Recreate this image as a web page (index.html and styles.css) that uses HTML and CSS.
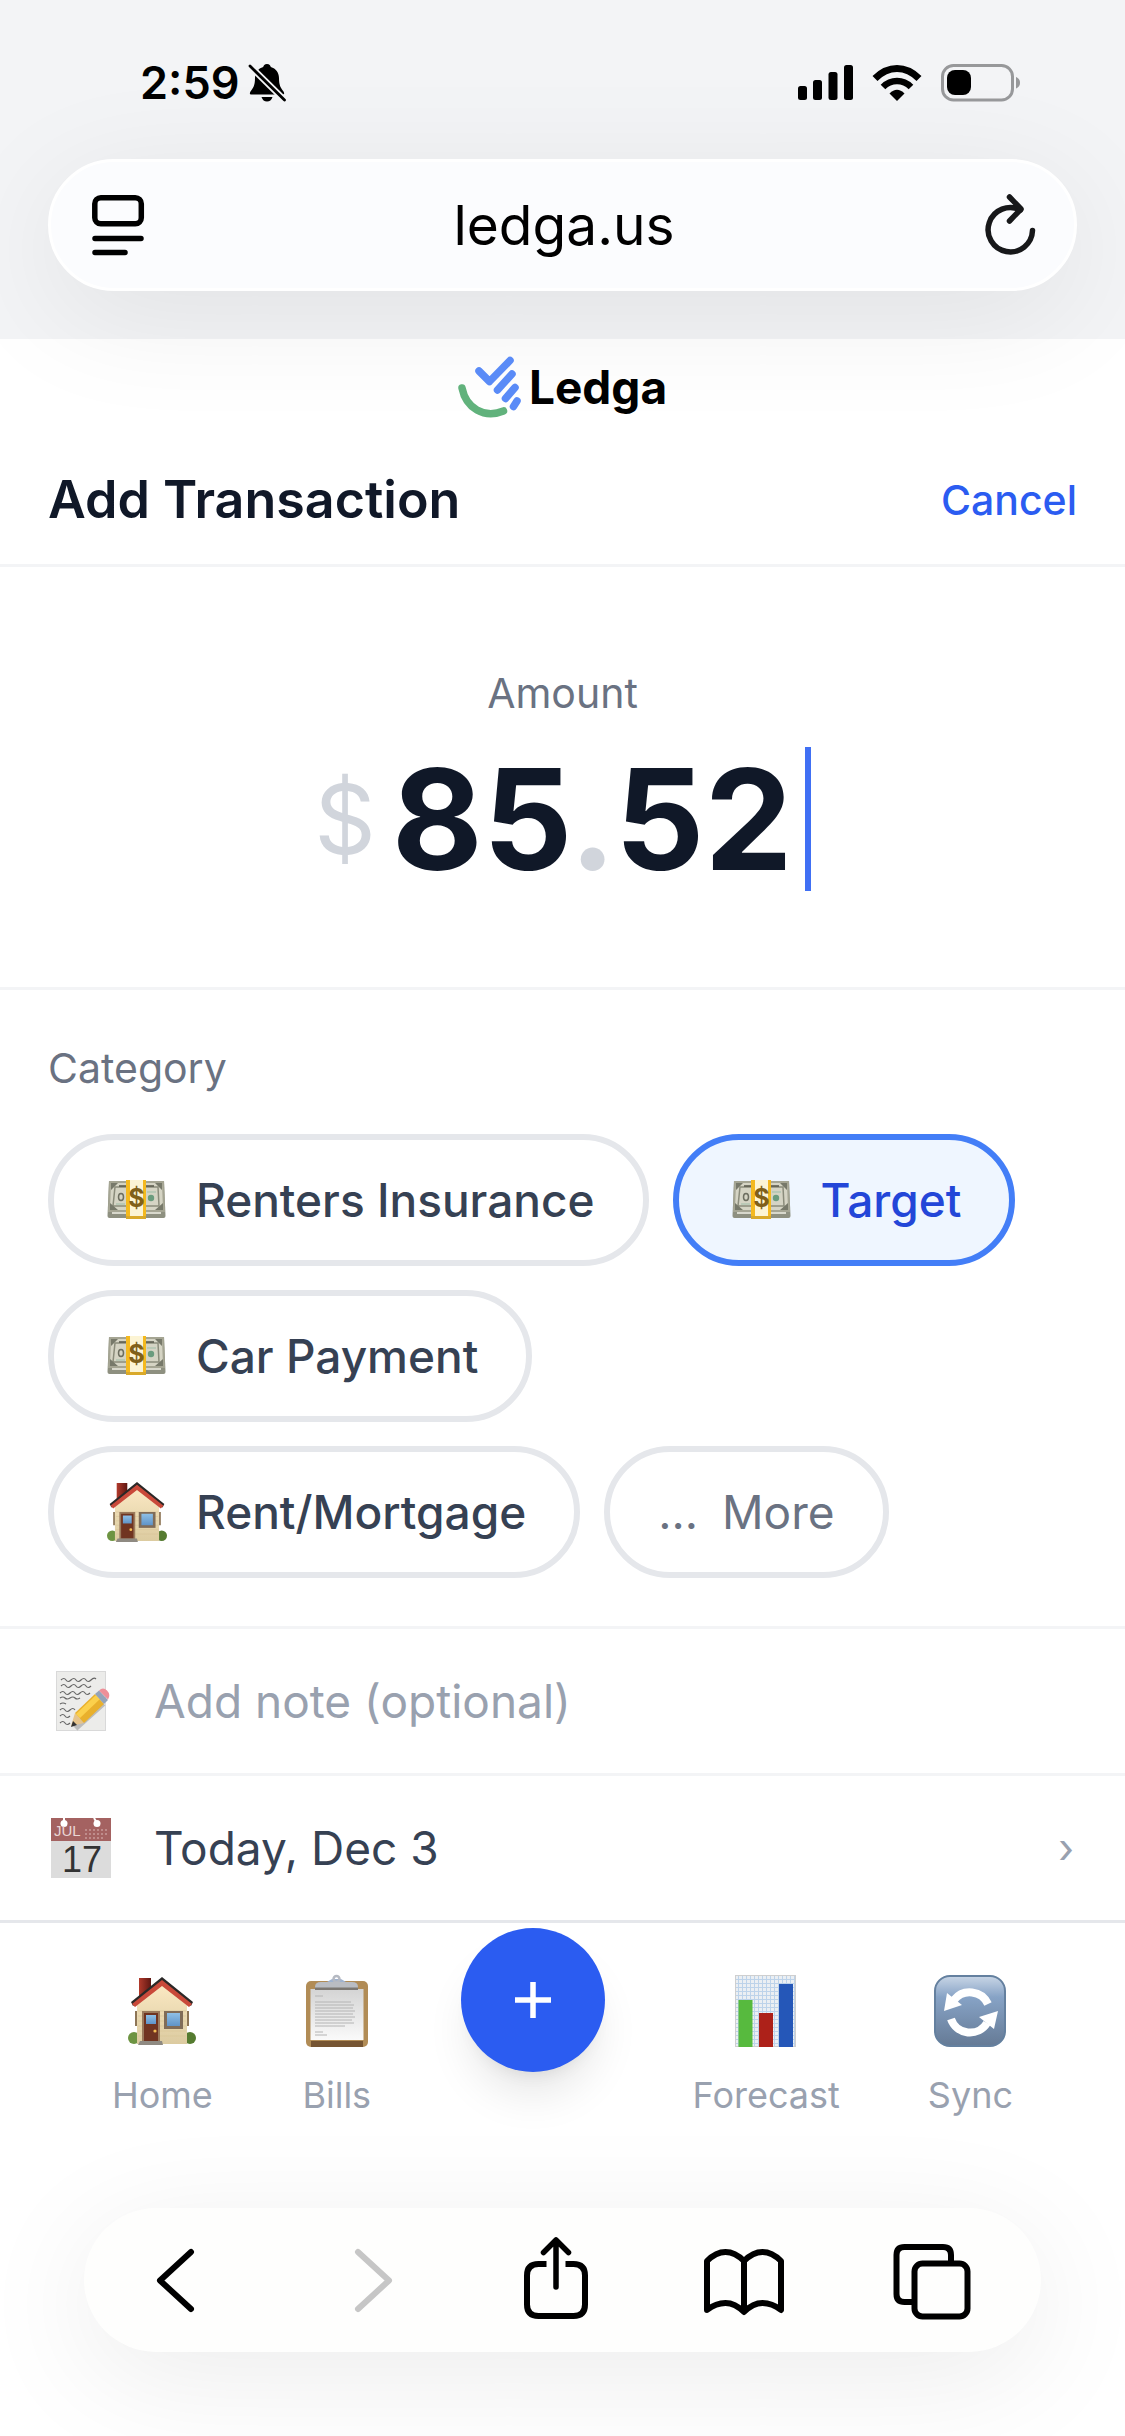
FILE: index.html
```html
<!DOCTYPE html>
<html lang="en">
<head>
    <meta charset="UTF-8">
    <meta name="viewport" content="width=device-width">
    <title>Ledga - Add Transaction</title>
    <link rel="stylesheet" href="styles.css">
</head>

<body>

<!-- shared icons -->
<svg class="defs" aria-hidden="true">
    <defs>
        <linearGradient id="wall" x1="0" y1="0" x2="0" y2="1"><stop offset="0" stop-color="#fbe9c4"/><stop offset="1" stop-color="#dccba0"/></linearGradient>
        <linearGradient id="sky" x1="0" y1="0" x2="0" y2="1"><stop offset="0" stop-color="#8fc0e6"/><stop offset="1" stop-color="#5f93c8"/></linearGradient>
        <linearGradient id="brick" x1="0" y1="0" x2="1" y2="0"><stop offset="0" stop-color="#b23a2c"/><stop offset="1" stop-color="#5e1712"/></linearGradient>
        <linearGradient id="paper" x1="0" y1="0" x2="0" y2="1"><stop offset="0" stop-color="#d4d4d4"/><stop offset="1" stop-color="#fafafa"/></linearGradient>
        <linearGradient id="steel" x1="0" y1="0" x2="0" y2="1"><stop offset="0" stop-color="#c9d6e6"/><stop offset="0.3" stop-color="#87a3c6"/><stop offset="1" stop-color="#657a95"/></linearGradient>
        <pattern id="grid" width="4" height="4" patternUnits="userSpaceOnUse"><path d="M0 .5h4M.5 0v4" stroke="#bdd3ea"/></pattern>

        <symbol id="money" viewBox="0 0 60 60">
            <path d="M2 11h55l1.500 35q0 2-2 2h-54q-2 0-2-2z" fill="#8e9080"/>
            <path d="M2 11h55l1 31h-57z" fill="#a5a593"/>
            <path d="M4 13h51l1 27h-53z" fill="#d5d4c4"/>
            <path d="M8 17h43l1 19h-46z" fill="none" stroke="#8b8c7b" stroke-width="1.500"/>
            <path d="M5 43h49" stroke="#d8d8cc" stroke-width="2"/>
            <path d="M4 13h7l-7 7zM55 13h-7l7 7zM3 40h8l-8-7zM56 40h-8l8-7z" fill="#77796a"/>
            <path d="M12 16h8M39 16h8" stroke="#555648" stroke-width="1.500"/>
            <ellipse cx="14" cy="27" rx="2.500" ry="3.500" fill="none" stroke="#6d6e60" stroke-width="1.500"/>
            <circle cx="44" cy="28" r="3.200" fill="#6b9c7e"/>
            <path d="M9 34h9M40 22h9" stroke="#9fbea9" stroke-width="1"/>
            <path d="M19 10h20v38h-20z" fill="#f4b91f"/>
            <path d="M23 10h13v38h-13z" fill="#fcf4d4"/>
            <path d="M19 46h20v3h-20z" fill="#d9a92a"/>
            <text x="29.500" y="37" text-anchor="middle" class="bill-sign">$</text>
        </symbol>

        <symbol id="house" viewBox="0 0 68 68">
            <circle cx="6" cy="61" r="6" fill="#6d9442"/>
            <circle cx="62" cy="61" r="6" fill="#557b30"/>
            <path d="M7 34h2v15h-2zM59 34h2v15h-2z" fill="#8d7556"/>
            <path d="M34 6l25 22v39h-50v-39z" fill="url(#wall)"/>
            <path d="M10 34h48M10 39h48M10 44h48M10 49h48M10 54h48M10 59h48" stroke="#d9c598" stroke-width=".7"/>
            <path d="M11 1h12v13l-12 10z" fill="url(#brick)"/>
            <path d="M3 25L34 0l31 25-2 4L34 6 5 29z" fill="#2b2827"/>
            <path d="M4 27L34 3l30 24-3 3L34 9 7 30z" fill="#c9493a"/>
            <path d="M14 34h18v32h-18z" fill="#9a7a5c"/>
            <path d="M16 36h14v28h-14z" fill="#703421"/>
            <path d="M18 38h10v9h-10z" fill="url(#sky)"/>
            <circle cx="27" cy="54" r="1.600" fill="#f3bd55"/>
            <path d="M36 34h19v18h-19z" fill="#806c58"/>
            <path d="M39 36h13v13h-13z" fill="url(#sky)"/>
            <path d="M12 64h22l1 4h-25z" fill="#8f8a82"/>
        </symbol>
    </defs>
</svg>

<header class="browser-top">
    <div class="status">
        <div class="status-left">
            <span>2:59</span>
            <!-- muted bell -->
            <svg width="38" height="38" viewBox="0 0 38 38">
                <path d="M19 0c2.500 0 3.500 1.500 3.800 3 5 1.500 8.200 5.500 8.200 11 0 8 2 10 4.500 13.500 1 1.500 1 3-1 3H3.500c-2 0-2-1.500-1-3C5 24 7 22 7 14c0-5.500 3.200-9.500 8.200-11C15.500 1.500 16.500 0 19 0z"/>
                <path d="M13.500 33h11q-1.500 4.500-5.500 4.500T13.500 33z"/>
                <path d="M2 2l35 34.500" stroke="#f3f4f6" stroke-width="6.500"/>
                <path d="M2 2l34.500 34" stroke="#000" stroke-width="2.800" stroke-linecap="round"/>
            </svg>
        </div>
        <div class="status-right">
            <svg width="55" height="36" viewBox="0 0 55 36">
                <rect x="0" y="21" width="9" height="14" rx="2.500"/>
                <rect x="15" y="15" width="9" height="20" rx="2.500"/>
                <rect x="30.500" y="7" width="9" height="28" rx="2.500"/>
                <rect x="46" y="0" width="9" height="35" rx="2.500"/>
            </svg>
            <svg width="50" height="36" viewBox="0 0 50 36">
                <path d="M3 13.500Q13 3.500 25 3.500t22 10" fill="none" stroke="#000" stroke-width="7"/>
                <path d="M11 22Q17 16 25 16t14 6" fill="none" stroke="#000" stroke-width="6.500"/>
                <path d="M17.500 28.500q7.500-7.500 15 0L25 36z"/>
            </svg>
            <svg width="80" height="38" viewBox="0 0 80 38">
                <rect x="1.500" y="1.500" width="70" height="34.500" rx="11" fill="none" stroke="#97989a" stroke-width="3"/>
                <rect x="6" y="6" width="24" height="25" rx="8"/>
                <path d="M75 13q4 1.500 4 5.700T75 24.500z" fill="#97989a"/>
            </svg>
        </div>
    </div>

    <div class="urlbar">
        <button class="plain" aria-label="Page menu">
            <svg width="52" height="62" viewBox="0 0 52 62" fill="none" stroke="#000" stroke-width="5.500" stroke-linecap="round">
                <rect x="2.800" y="3.800" width="46.500" height="26" rx="6"/>
                <path d="M3 44.500h46M3 58.500h30"/>
            </svg>
        </button>
        <button class="plain address">ledga.us</button>
        <button class="plain" aria-label="Reload">
            <svg width="52" height="62" viewBox="0 0 52 62" fill="none" stroke="#17181a" stroke-width="5.500" stroke-linecap="round" stroke-linejoin="round">
                <path d="M48.500 36.500A22.200 22.200 0 1 1 36.500 16"/>
                <path d="M25.500 3L37 15 25.500 27"/>
            </svg>
        </button>
    </div>
</header>

<main>
    <div class="brand">
        <svg width="64" height="62" viewBox="0 0 64 62" fill="none" stroke-width="7.500" stroke-linecap="round" stroke-linejoin="round">
            <path d="M4 32C8 52 26 63 45.500 55" stroke="#61b27c"/>
            <path d="M21 15l10.500 10.500L52 4.500M39.500 34L54 18M47.500 42.500l9.500-11M55.500 50.500l3.500-5.500" stroke="#5a8bf7"/>
        </svg>
        <span>Ledga</span>
    </div>

    <div class="title-row">
        <h1>Add Transaction</h1>
        <a href="#">Cancel</a>
    </div>

    <section class="amount">
        <p class="caption">Amount</p>
        <div class="value">
            <span class="currency">$</span>
            <span class="digits">85<span class="dot">.</span>52</span>
            <span class="caret"></span>
        </div>
    </section>

    <section class="category">
        <p class="caption">Category</p>
        <div class="chips">
            <button class="chip"><svg class="chip-icon"><use href="#money"/></svg>Renters Insurance</button>
            <button class="chip selected"><svg class="chip-icon"><use href="#money"/></svg>Target</button>
            <button class="chip"><svg class="chip-icon"><use href="#money"/></svg>Car Payment</button>
            <button class="chip"><svg class="chip-icon"><use href="#house"/></svg>Rent/Mortgage</button>
            <button class="chip more"><span>...</span>More</button>
        </div>
    </section>

    <div class="row">
        <label for="note" aria-label="Note">
            <svg width="60" height="60" viewBox="0 0 60 60">
                <rect x="5" y="0" width="50" height="60" fill="#d9d9d9"/>
                <rect x="6" y="1" width="48" height="58" fill="#ececea"/>
                <path d="M10 9q3-3 5 0t5 0 5 0 5 0 5 0 5 0 5-1M10 15q3-3 5 0t5 0 5 0 5 0 5 0 5 0M9 22q3-3 5 0t5 0 5 0 5 0 5 0 5 0M9 27q3-2 5 0t5 0 5 0 5 0M9 33q3-2 6 0M9 39q3-3 5 0t5 0 5 0M9 45q3-3 5 0t5 0M9 52q3-3 5 0t5 0" fill="none" stroke="#666" stroke-width="1.200"/>
                <path d="M24 57L52 32" stroke="#000" stroke-opacity=".2" stroke-width="7"/>
                <path d="M20 55l4-13 9 10z" fill="#e6c48c"/>
                <path d="M20 56l2-6 4 4z" fill="#333"/>
                <path d="M24 42l20-19 9 10-20 19z" fill="#e9b02c"/>
                <path d="M25 43l20-19 4 4-20 19z" fill="#fbd04c"/>
                <path d="M44 23l4-3.500 9 9.500-4 4z" fill="#94a3b8"/>
                <path d="M48 19.500q4-4 8 0t1 9z" fill="#ee8f98"/>
            </svg>
        </label>
        <input id="note" type="text" placeholder="Add note (optional)">
    </div>

    <button class="row date">
        <svg width="60" height="60" viewBox="0 0 60 60">
            <rect width="60" height="60" fill="#dcdcdc"/>
            <rect width="60" height="23" fill="#a46261"/>
            <path d="M13 0v5M43 0l3 5" stroke="#fff" stroke-width="2"/>
            <circle cx="13" cy="5.500" r="3.500" fill="#fff"/>
            <circle cx="46" cy="5.500" r="3.500" fill="#fff"/>
            <path d="M34 12h24M34 16h24M34 20h20" stroke="#c79a99" stroke-width="1.500" stroke-dasharray="2 2"/>
            <text x="3" y="18" class="cal-month">JUL</text>
            <text x="31" y="54" text-anchor="middle" class="cal-day">17</text>
        </svg>
        <span class="row-text">Today, Dec 3</span>
        <span class="arrow">›</span>
    </button>
</main>

<nav class="tabs">
    <a href="#">
        <svg width="72" height="72" viewBox="0 0 72 72"><use href="#house" x="2" y="2" width="68" height="68"/></svg>
        Home
    </a>
    <a href="#">
        <svg width="72" height="72" viewBox="0 0 72 72">
            <rect x="5" y="6" width="62" height="66" rx="5" fill="#b18c56"/>
            <path d="M10 66h52v6h-52z" fill="#765533"/>
            <path d="M9.500 14h53v51h-53z" fill="url(#paper)"/>
            <path d="M14 21h8M14 27h36M14 30h39M14 33h38M14 36h40M14 39h38M14 42h40M14 45h37M14 48h39M14 51h30M14 57h8M14 60h12" stroke="#b4b4b4" stroke-width="1"/>
            <path d="M26 7l5-3h9l5 3z" fill="#9fb2cf"/>
            <circle cx="35.500" cy="4" r="3" fill="none" stroke="#b5b9c2" stroke-width="2.500"/>
            <path d="M14 15v-3q0-5 6-5h31q6 0 6 5v3z" fill="#b9bcc2"/>
            <path d="M14 12.500h43v2.500h-43z" fill="#7c7873"/>
        </svg>
        Bills
    </a>
    <button class="add" aria-label="Add">
        <svg width="36" height="36" viewBox="0 0 36 36"><path d="M18 0v36M0 18h36" stroke="#fff" stroke-width="5.500"/></svg>
    </button>
    <a href="#">
        <svg width="72" height="72" viewBox="0 0 72 72">
            <rect x="5" y="0" width="61" height="72" fill="#ebeff3"/>
            <rect x="5" y="0" width="61" height="72" fill="url(#grid)"/>
            <rect x="5.500" y=".5" width="60" height="71" fill="none" stroke="#cfcfcf"/>
            <path d="M8.500 25h14v47h-14z" fill="#57ba3e"/>
            <path d="M29 38h14v34h-14z" fill="#ad2119"/>
            <path d="M49 9h14v63h-14z" fill="#2557b8"/>
        </svg>
        Forecast
    </a>
    <a href="#">
        <svg width="72" height="72" viewBox="0 0 72 72">
            <rect x="1" y="1" width="70" height="70" rx="15" fill="url(#steel)" stroke="#64809f" stroke-width="2"/>
            <path d="M54 29A20 20 0 0 0 20 25M17 44A20 20 0 0 0 53 48" fill="none" stroke="#fff" stroke-width="8"/>
            <path d="M13 18l15 12-18 6zM60 54L45 42l19-6z" fill="#fff"/>
        </svg>
        Sync
    </a>
</nav>

<footer class="toolbar">
    <button class="plain" aria-label="Back">
        <svg width="80" height="84" viewBox="0 0 80 84" fill="none" stroke="#000" stroke-width="6" stroke-linecap="round" stroke-linejoin="round"><path d="M53 14L22 42.500 53 71"/></svg>
    </button>
    <button class="plain" aria-label="Forward" disabled>
        <svg width="80" height="84" viewBox="0 0 80 84" fill="none" stroke="#c6c6c6" stroke-width="6" stroke-linecap="round" stroke-linejoin="round"><path d="M31 14l31 28.500L31 71"/></svg>
    </button>
    <button class="plain" aria-label="Share">
        <svg width="80" height="84" viewBox="0 0 80 84" fill="none" stroke="#000" stroke-width="6" stroke-linecap="round" stroke-linejoin="round">
            <path d="M31.500 26H23.500q-11.500 0-11.500 11.500v29q0 11.500 11.500 11.500h35q11.500 0 11.500-11.500v-29Q70 26 58.500 26H50.500" stroke-linecap="butt"/>
            <path d="M41 49V3M28.500 14.500L41 2l12.500 12.500" stroke-width="5.500"/>
        </svg>
    </button>
    <button class="plain" aria-label="Bookmarks">
        <svg width="80" height="84" viewBox="0 0 80 84" fill="none" stroke="#000" stroke-width="6" stroke-linecap="round" stroke-linejoin="round">
            <path d="M40 23v50M40 23Q31 14 21.500 14T3 23v49q9-7 18.500-7T40 74q9-9 18.500-9T77 72V23q-9-9-18.500-9T40 23z"/>
        </svg>
    </button>
    <button class="plain" aria-label="Tabs">
        <svg width="80" height="84" viewBox="0 0 80 84" fill="none" stroke="#000" stroke-width="6">
            <path d="M59 26v-9q0-8-8-8H12.500q-8 0-8 8v39q0 8 8 8H20"/>
            <rect x="22.500" y="25.500" width="53" height="53" rx="8"/>
        </svg>
    </button>
</footer>

</body>
</html>
```
FILE: styles.css
```css
* {
    box-sizing: border-box;
}

body {
    margin: 0;
    background: #fff;
    color: #101828;
    font-family: Inter, "Liberation Sans", sans-serif;
    font-size: 46px;
}

button, input {
    font: inherit;
    color: inherit;
    border: none;
    background: none;
    padding: 0;
    margin: 0;
}

svg {
    display: block;
    flex: none;
    overflow: visible;
}

.defs {
    position: absolute;
    width: 0;
    height: 0;
}

.plain {
    color: #000;
}

/* browser chrome, top */
.browser-top {
    background: #f3f4f6;
    padding: 0 48px 48px;
}

.status {
    display: flex;
    justify-content: space-between;
    align-items: center;
    height: 159px;
    padding: 6px 56px 0 92px;
    color: #000;
    font-size: 45px;
    font-weight: 600;
}

.status-left {
    display: flex;
    align-items: center;
    gap: 9px;
}

.status-right {
    display: flex;
    align-items: center;
    gap: 19px;
}

.urlbar {
    display: flex;
    justify-content: space-between;
    align-items: center;
    height: 132px;
    padding: 0 38px 0 41px;
    border: 3px solid #fff;
    border-radius: 66px;
    background: #fbfcfe;
    box-shadow: 0 24px 120px rgba(0, 0, 0, 0.08);
}

.address {
    font-size: 55px;
}

/* page */
.brand {
    display: flex;
    justify-content: center;
    align-items: center;
    gap: 7px;
    height: 96px;
    color: #000;
    font-weight: 700;
}

.title-row {
    display: flex;
    justify-content: space-between;
    align-items: center;
    height: 132px;
    padding: 0 48px;
    border-bottom: 3px solid #f3f4f6;
}

h1 {
    margin: 0;
    font-size: 52px;
    font-weight: 600;
}

.title-row a {
    color: #2b5cf1;
    font-size: 41px;
    font-weight: 500;
    text-decoration: none;
}

.caption {
    margin: 0;
    color: #6a7282;
    font-size: 41px;
    line-height: 60px;
}

.amount {
    padding: 96px 48px;
    border-bottom: 3px solid #f3f4f6;
    text-align: center;
}

.value {
    display: flex;
    justify-content: center;
    align-items: center;
    margin-top: 24px;
    height: 144px;
}

.currency {
    margin-right: 16px;
    color: #d1d5dc;
    font-size: 96px;
}

.digits {
    font-size: 140px;
    font-weight: 700;
    line-height: 144px;
}

.dot {
    color: #d1d5dc;
}

.caret {
    width: 6px;
    height: 144px;
    margin-left: 12px;
    background: #4070f4;
}

.category {
    padding: 48px;
    border-bottom: 3px solid #f3f4f6;
}

.chips {
    display: flex;
    flex-wrap: wrap;
    gap: 24px;
    margin-top: 36px;
}

.chip {
    display: flex;
    align-items: center;
    gap: 24px;
    height: 132px;
    padding: 0 48px;
    border: 6px solid #e5e7eb;
    border-radius: 66px;
    color: #364153;
    font-weight: 500;
    white-space: nowrap;
}

.chip.selected {
    border-color: #437ef7;
    background: #eff6ff;
    color: #2346d8;
}

.chip.more {
    color: #6a7282;
    font-weight: 400;
}

.chip-icon {
    width: 60px;
    height: 60px;
    margin: 0 5px;
}

.bill-sign {
    fill: #80601a;
    font-size: 25px;
    font-weight: 700;
}

.row {
    display: flex;
    align-items: center;
    gap: 43px;
    width: 100%;
    height: 147px;
    padding: 0 51px;
    border-bottom: 3px solid #f3f4f6;
    text-align: left;
}

.row input {
    flex: 1;
    min-width: 0;
}

.row input::placeholder {
    color: #99a1af;
    opacity: 1;
}

.date {
    border-bottom: 3px solid #e5e7eb;
    color: #364153;
}

.row-text {
    flex: 1;
}

.arrow {
    color: #99a1af;
    font-size: 41px;
}

.cal-month {
    fill: #ead6d5;
    font-family: "Liberation Sans", sans-serif;
    font-size: 15px;
}

.cal-day {
    fill: #333;
    font-family: "Liberation Sans", sans-serif;
    font-size: 36px;
}

.tabs {
    display: flex;
    justify-content: space-around;
    padding: 0 68px 89px;
}

.tabs a {
    display: flex;
    flex-direction: column;
    align-items: center;
    gap: 24px;
    padding-top: 52px;
    color: #99a1af;
    font-size: 36px;
    line-height: 48px;
    text-decoration: none;
}

.add {
    display: flex;
    justify-content: center;
    align-items: center;
    width: 144px;
    height: 144px;
    margin-top: 5px;
    border-radius: 50%;
    background: #2b5cf1;
    box-shadow: 0 30px 45px -9px rgba(0, 0, 0, 0.1), 0 12px 18px -12px rgba(0, 0, 0, 0.1);
}

/* browser chrome, bottom */
.toolbar {
    display: flex;
    justify-content: space-between;
    align-items: center;
    height: 144px;
    margin: 0 84px 84px;
    padding: 0 69px 0 54px;
    border-radius: 72px;
    background: #fefefd;
    box-shadow: 0 24px 120px rgba(0, 0, 0, 0.08);
}
```
